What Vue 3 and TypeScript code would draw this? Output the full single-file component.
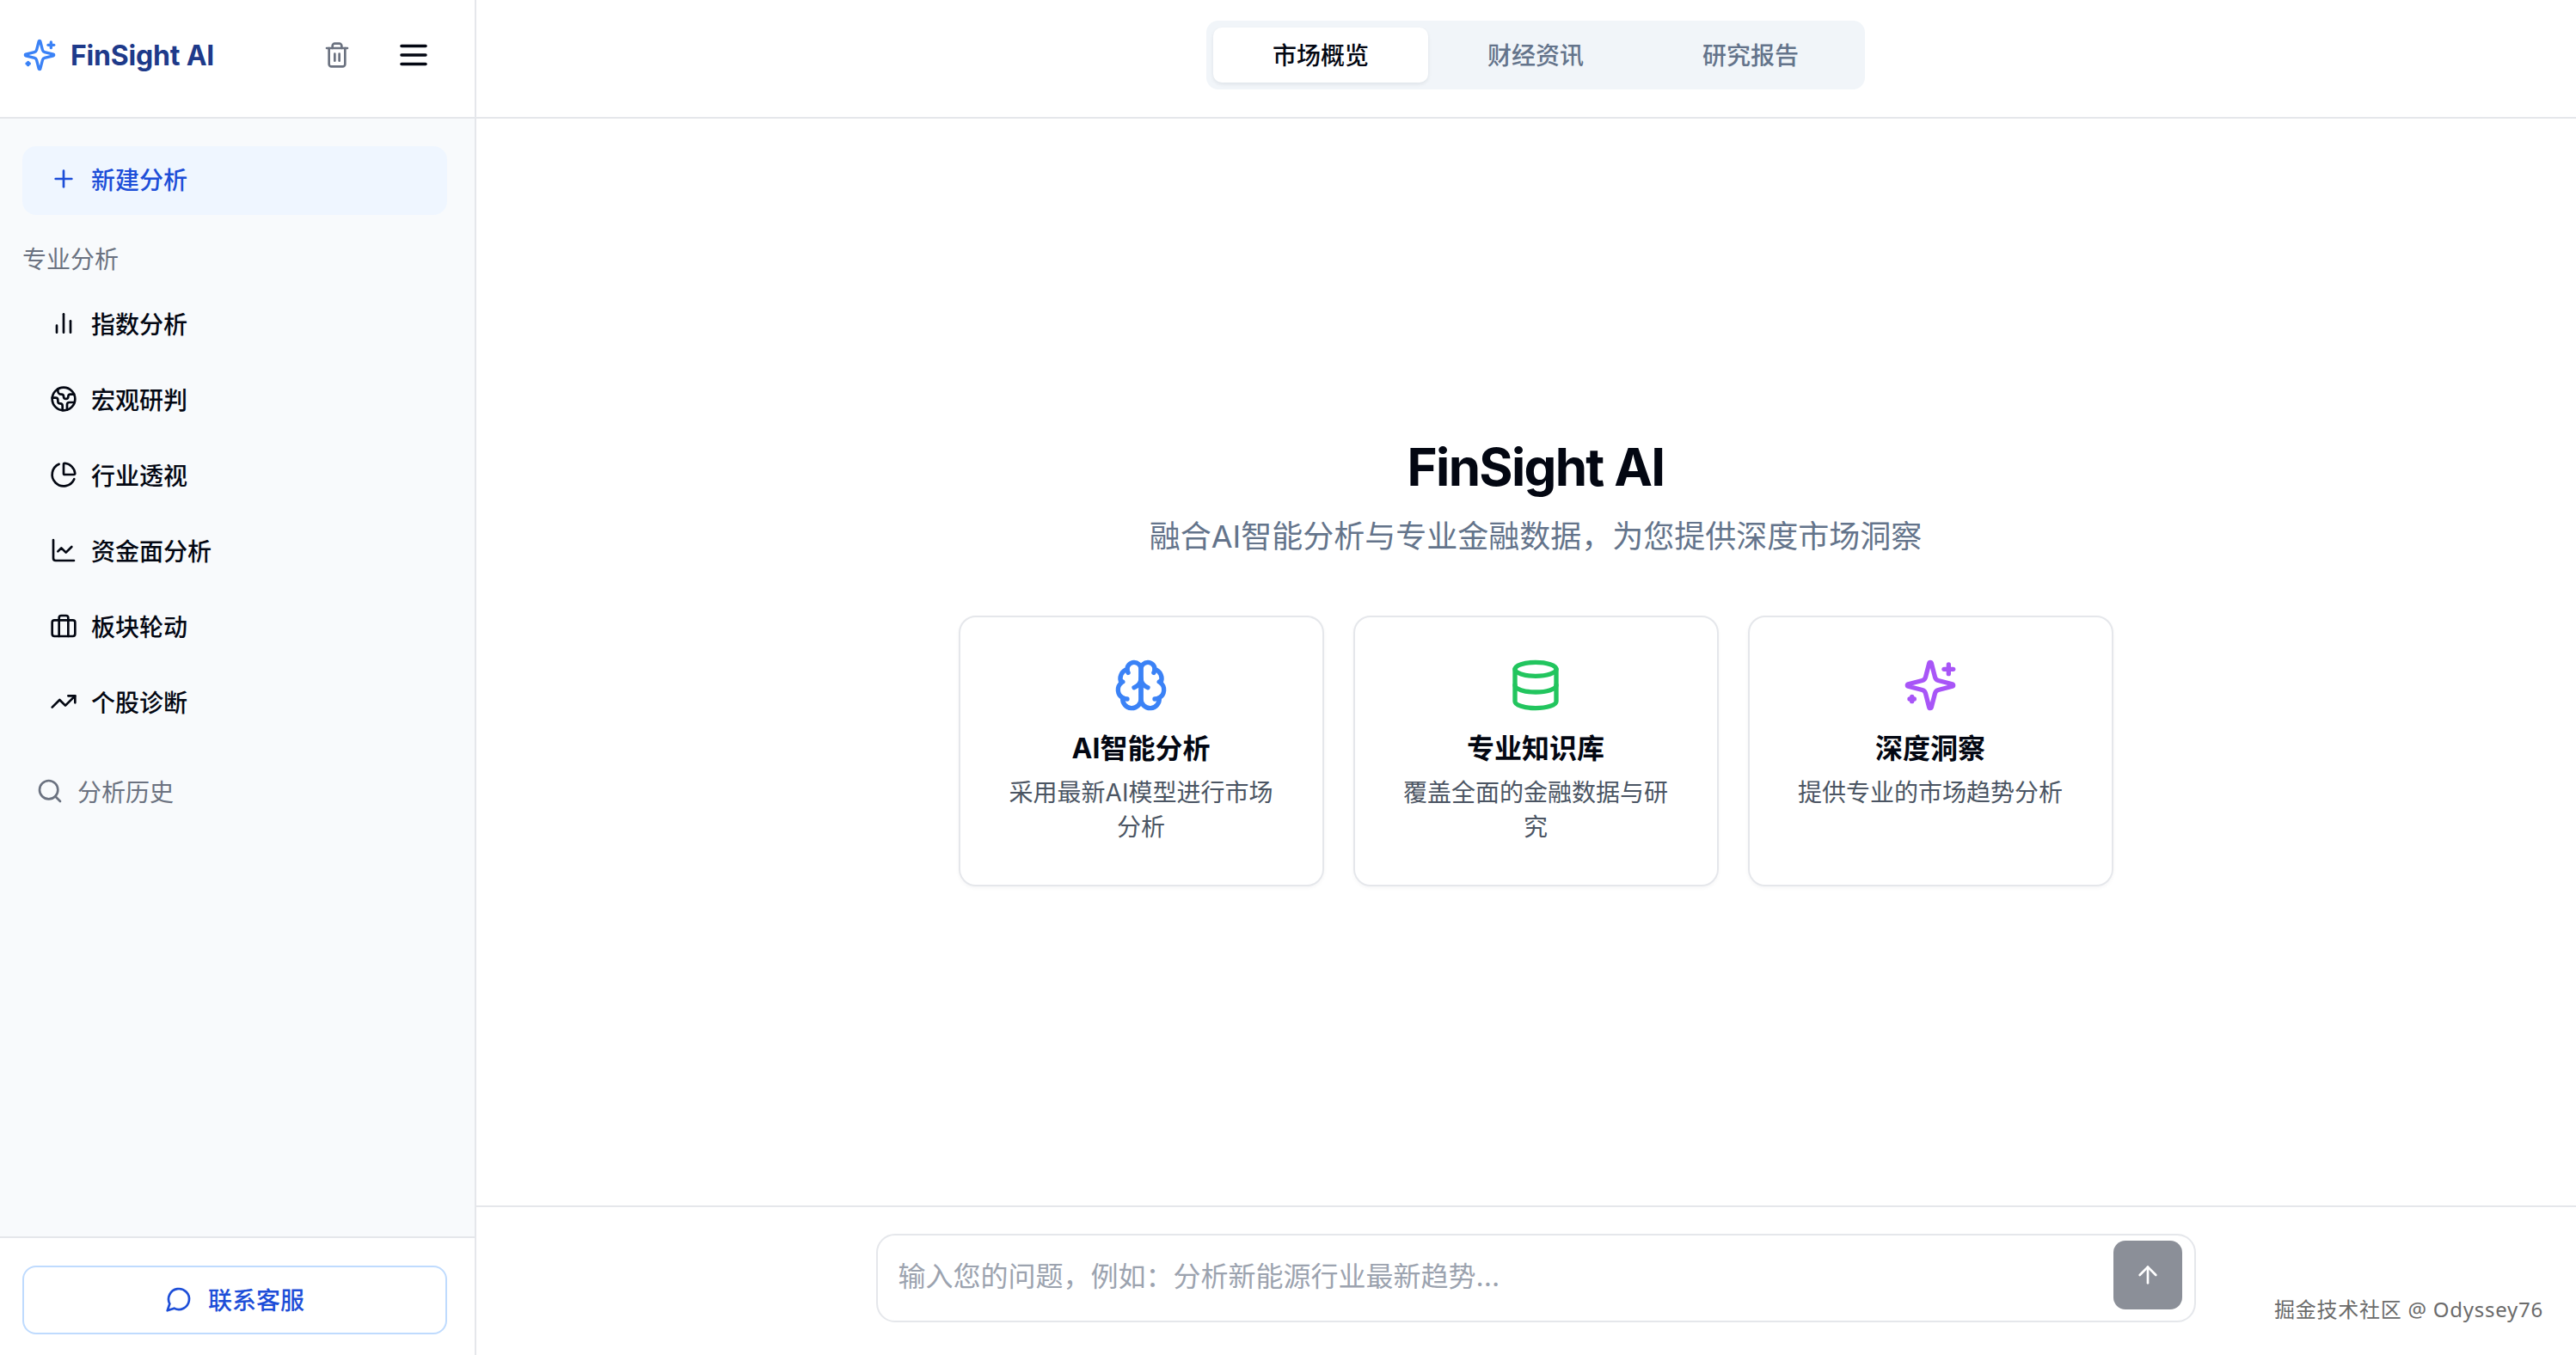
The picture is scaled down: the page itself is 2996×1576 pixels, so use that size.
<template>
  <div class="page">
    <aside class="sidebar">
      <div class="side-top">
        <div class="brand">
          <svg class="logo" viewBox="0 0 24 24"><path v-for="d in icons.sparkles" :key="d" :d="d" /></svg>
          <span>FinSight AI</span>
        </div>
        <svg class="ic trash" viewBox="0 0 24 24"><path v-for="d in icons.trash" :key="d" :d="d" /></svg>
        <svg class="menu" viewBox="0 0 24 24"><path v-for="d in icons.menu" :key="d" :d="d" /></svg>
      </div>

      <div class="side-body">
        <div class="new-btn">
          <svg class="ic" viewBox="0 0 24 24"><path v-for="d in icons.plus" :key="d" :d="d" /></svg>
          <span>新建分析</span>
        </div>
        <div class="side-label">专业分析</div>
        <ul class="nav">
          <li v-for="item in navItems" :key="item.label">
            <svg class="ic" viewBox="0 0 24 24"><path v-for="d in item.paths" :key="d" :d="d" /></svg>
            <span>{{ item.label }}</span>
          </li>
        </ul>
        <div class="history">
          <svg class="ic" viewBox="0 0 24 24"><path v-for="d in icons.search" :key="d" :d="d" /></svg>
          <span>分析历史</span>
        </div>
      </div>

      <div class="side-foot">
        <div class="contact">
          <svg class="ic" viewBox="0 0 24 24"><path v-for="d in icons.message" :key="d" :d="d" /></svg>
          <span>联系客服</span>
        </div>
      </div>
    </aside>

    <main class="main">
      <header class="topbar">
        <div class="tabs">
          <div
            v-for="(tab, i) in tabs"
            :key="tab"
            class="tab"
            :class="{ active: i === 0 }"
          >
            {{ tab }}
          </div>
        </div>
      </header>

      <section class="hero">
        <h1>FinSight AI</h1>
        <p class="sub">融合AI智能分析与专业金融数据，为您提供深度市场洞察</p>
        <div class="cards">
          <div v-for="card in cards" :key="card.title" class="card">
            <svg class="card-ic" :class="card.tone" viewBox="0 0 24 24"><path v-for="d in card.paths" :key="d" :d="d" /></svg>
            <h3>{{ card.title }}</h3>
            <p>{{ card.desc }}</p>
          </div>
        </div>
      </section>

      <footer class="composer">
        <div class="input-box">
          <input type="text" placeholder="输入您的问题，例如：分析新能源行业最新趋势..." />
          <button class="send" type="button">
            <svg class="ic" viewBox="0 0 24 24"><path v-for="d in icons.arrow" :key="d" :d="d" /></svg>
          </button>
        </div>
      </footer>
    </main>

    <div class="watermark">掘金技术社区 @ Odyssey76</div>
  </div>
</template>

<script setup lang="ts">
const icons: Record<string, string[]> = {
  sparkles: [
    'M9.937 15.5A2 2 0 0 0 8.5 14.063l-6.135-1.582a.5.5 0 0 1 0-.962L8.5 9.936A2 2 0 0 0 9.937 8.5l1.582-6.135a.5.5 0 0 1 .963 0L14.063 8.5A2 2 0 0 0 15.5 9.937l6.135 1.581a.5.5 0 0 1 0 .964L15.5 14.063a2 2 0 0 0-1.437 1.437l-1.582 6.135a.5.5 0 0 1-.963 0z',
    'M20 3v4',
    'M22 5h-4',
    'M4 17v2',
    'M5 18H3',
  ],
  trash: [
    'M3 6h18',
    'M19 6v14c0 1-1 2-2 2H7c-1 0-2-1-2-2V6',
    'M8 6V4c0-1 1-2 2-2h4c1 0 2 1 2 2v2',
    'M10 11v6',
    'M14 11v6',
  ],
  menu: ['M4 6h16', 'M4 12h16', 'M4 18h16'],
  plus: ['M5 12h14', 'M12 5v14'],
  search: ['M19 11a8 8 0 1 1-16 0a8 8 0 1 1 16 0z', 'm21 21-4.3-4.3'],
  message: ['M7.9 20A9 9 0 1 0 4 16.1L2 22Z'],
  arrow: ['m5 12 7-7 7 7', 'M12 19V5'],
  brain: [
    'M12 5a3 3 0 1 0-5.997.125 4 4 0 0 0-2.526 5.77 4 4 0 0 0 .556 6.588A4 4 0 1 0 12 18Z',
    'M12 5a3 3 0 1 1 5.997.125 4 4 0 0 1 2.526 5.77 4 4 0 0 1-.556 6.588A4 4 0 1 1 12 18Z',
    'M15 13a4.5 4.5 0 0 1-3-4 4.5 4.5 0 0 1-3 4',
    'M17.599 6.5a3 3 0 0 0 .399-1.375',
    'M6.003 5.125A3 3 0 0 0 6.401 6.5',
    'M3.477 10.896a4 4 0 0 1 .585-.396',
    'M19.938 10.5a4 4 0 0 1 .585.396',
    'M6 18a4 4 0 0 1-1.967-.516',
    'M19.967 17.484A4 4 0 0 1 18 18',
  ],
  database: [
    'M21 5a9 3 0 1 1-18 0a9 3 0 1 1 18 0z',
    'M3 5V19A9 3 0 0 0 21 19V5',
    'M3 12A9 3 0 0 0 21 12',
  ],
}

const navItems = [
  { label: '指数分析', paths: ['M18 20V10', 'M12 20V4', 'M6 20v-6'] },
  {
    label: '宏观研判',
    paths: [
      'M21.54 15H17a2 2 0 0 0-2 2v4.54',
      'M7 3.34V5a3 3 0 0 0 3 3a2 2 0 0 1 2 2c0 1.1.9 2 2 2a2 2 0 0 0 2-2c0-1.1.9-2 2-2h3.17',
      'M11 21.95V18a2 2 0 0 0-2-2a2 2 0 0 1-2-2v-1a2 2 0 0 0-2-2H2.05',
      'M22 12a10 10 0 1 1-20 0a10 10 0 1 1 20 0z',
    ],
  },
  {
    label: '行业透视',
    paths: [
      'M21 12c.552 0 1.005-.449.95-.998a10 10 0 0 0-8.953-8.951c-.55-.055-.998.398-.998.95v8a1 1 0 0 0 1 1z',
      'M21.21 15.89A10 10 0 1 1 8 2.83',
    ],
  },
  { label: '资金面分析', paths: ['M3 3v16a2 2 0 0 0 2 2h16', 'm19 9-5 5-4-4-3 3'] },
  {
    label: '板块轮动',
    paths: [
      'M4 7h16a2 2 0 0 1 2 2v10a2 2 0 0 1-2 2H4a2 2 0 0 1-2-2V9a2 2 0 0 1 2-2z',
      'M16 21V5a2 2 0 0 0-2-2h-4a2 2 0 0 0-2 2v16',
    ],
  },
  { label: '个股诊断', paths: ['M22 7 13.5 15.5 8.5 10.5 2 17', 'M16 7h6v6'] },
]

const tabs = ['市场概览', '财经资讯', '研究报告']

const cards = [
  { title: 'AI智能分析', desc: '采用最新AI模型进行市场分析', tone: 'blue', paths: icons.brain },
  { title: '专业知识库', desc: '覆盖全面的金融数据与研究', tone: 'green', paths: icons.database },
  { title: '深度洞察', desc: '提供专业的市场趋势分析', tone: 'purple', paths: icons.sparkles },
]
</script>

<style>
html,
body {
  margin: 0;
  background: #fff;
}
</style>

<style scoped>
.page {
  position: relative;
  display: flex;
  height: 1576px;
  overflow: hidden;
  font-family: Inter, "Noto Sans CJK SC", sans-serif;
  color: #030712;
}

svg {
  fill: none;
  stroke: currentColor;
  stroke-width: 2;
  stroke-linecap: round;
  stroke-linejoin: round;
  flex: none;
}

.ic {
  width: 32px;
  height: 32px;
}

/* sidebar */
.sidebar {
  width: 554px;
  flex: none;
  display: flex;
  flex-direction: column;
  box-sizing: border-box;
  border-right: 2px solid #e5e7eb;
  background: #f8fafc;
}

.side-top {
  height: 138px;
  box-sizing: border-box;
  flex: none;
  display: flex;
  align-items: center;
  padding: 0 50px 8px 26px;
  background: #fff;
  border-bottom: 2px solid #e5e7eb;
}

.brand {
  flex: 1;
  display: flex;
  align-items: center;
  gap: 16px;
  font-size: 32px;
  font-weight: 700;
  letter-spacing: -0.2px;
  color: #1e3a8a;
}

.logo {
  width: 40px;
  height: 40px;
  color: #3b82f6;
}

.trash {
  color: #6b7280;
  margin-right: 52px;
}

.menu {
  width: 42px;
  height: 42px;
  color: #030712;
}

.side-body {
  flex: 1;
  padding: 32px 32px 0 26px;
}

.new-btn {
  display: flex;
  align-items: center;
  gap: 16px;
  height: 80px;
  box-sizing: border-box;
  padding: 0 0 4px 32px;
  border-radius: 16px;
  background: #eff6ff;
  color: #1d4ed8;
  font-size: 28px;
  font-weight: 500;
}

.side-label {
  margin-top: 32px;
  font-size: 28px;
  line-height: 40px;
  color: #6b7280;
}

.nav {
  list-style: none;
  margin: 10px 0 0;
  padding: 0;
}

.nav li {
  height: 88px;
  display: flex;
  align-items: center;
  gap: 16px;
  padding-left: 32px;
  font-size: 28px;
  font-weight: 500;
  color: #030712;
}

.history {
  margin-top: 40px;
  display: flex;
  align-items: center;
  gap: 16px;
  padding-left: 16px;
  font-size: 28px;
  color: #6b7280;
}

.side-foot {
  flex: none;
  height: 138px;
  box-sizing: border-box;
  padding: 32px 32px 0 26px;
  background: #fff;
  border-top: 2px solid #e5e7eb;
}

.contact {
  height: 80px;
  box-sizing: border-box;
  display: flex;
  align-items: center;
  justify-content: center;
  gap: 18px;
  padding-bottom: 3px;
  border: 2px solid #bfdbfe;
  border-radius: 16px;
  color: #1d4ed8;
  font-size: 28px;
  font-weight: 500;
}

/* main column */
.main {
  flex: 1;
  min-width: 0;
  display: flex;
  flex-direction: column;
}

.topbar {
  height: 138px;
  box-sizing: border-box;
  flex: none;
  display: flex;
  justify-content: center;
  padding: 24px 0 0 22px;
  border-bottom: 2px solid #e5e7eb;
}

.tabs {
  display: flex;
  height: 80px;
  box-sizing: border-box;
  padding: 8px;
  border-radius: 14px;
  background: #f1f5f9;
}

.tab {
  width: 250px;
  display: flex;
  align-items: center;
  justify-content: center;
  padding-bottom: 2px;
  box-sizing: border-box;
  border-radius: 10px;
  font-size: 28px;
  font-weight: 500;
  color: #64748b;
}

.tab.active {
  background: #fff;
  color: #030712;
  box-shadow: 0 2px 4px rgba(15, 23, 42, 0.08);
}

.hero {
  flex: 1;
  display: flex;
  flex-direction: column;
  align-items: center;
  padding: 365px 0 0 22px;
}

.hero h1 {
  margin: 0;
  font-size: 60px;
  line-height: 80px;
  font-weight: 700;
  letter-spacing: -1.7px;
  color: #030712;
}

.sub {
  margin: 19px 0 0;
  font-size: 36px;
  line-height: 44px;
  color: #64748b;
}

.cards {
  display: flex;
  gap: 34px;
  margin-top: 70px;
}

.card {
  width: 425px;
  height: 315px;
  box-sizing: border-box;
  padding: 47px 48px 0;
  border: 2px solid #e5e7eb;
  border-radius: 20px;
  text-align: center;
  box-shadow: 0 2px 4px rgba(15, 23, 42, 0.04);
}

.card-ic {
  display: block;
  width: 64px;
  height: 64px;
  margin: 0 auto;
  stroke-width: 2;
}

.blue {
  color: #3b82f6;
}

.green {
  color: #22c55e;
}

.purple {
  color: #a855f7;
}

.card h3 {
  margin: 20px 0 0;
  font-size: 32px;
  line-height: 44px;
  font-weight: 700;
  color: #030712;
}

.card p {
  margin: 9px 0 0;
  font-size: 28px;
  line-height: 40px;
  color: #4b5563;
}

.composer {
  flex: none;
  height: 174px;
  box-sizing: border-box;
  display: flex;
  justify-content: center;
  padding: 31px 0 0 22px;
  border-top: 2px solid #e5e7eb;
}

.input-box {
  width: 1535px;
  height: 103px;
  box-sizing: border-box;
  display: flex;
  align-items: center;
  padding: 0 14px 0 24px;
  border: 2px solid #e5e7eb;
  border-radius: 22px;
}

.input-box input {
  flex: 1;
  min-width: 0;
  border: 0;
  outline: 0;
  padding: 0 0 4px;
  background: transparent;
  font-family: inherit;
  font-size: 32px;
}

.input-box input::placeholder {
  color: #9ca3af;
  opacity: 1;
}

.send {
  align-self: flex-start;
  margin-top: 6px;
  width: 80px;
  height: 80px;
  display: flex;
  align-items: center;
  justify-content: center;
  padding: 0;
  border: 0;
  border-radius: 14px;
  background: #8b8f98;
  color: #fff;
}

.watermark {
  position: absolute;
  right: 38px;
  bottom: 36px;
  font-family: "Noto Sans", "Noto Sans CJK SC", sans-serif;
  font-size: 24px;
  line-height: 34px;
  letter-spacing: 0.75px;
  color: #6b6b6b;
  text-shadow: -1px 1px 1px rgba(255, 255, 255, 0.8);
}
</style>
